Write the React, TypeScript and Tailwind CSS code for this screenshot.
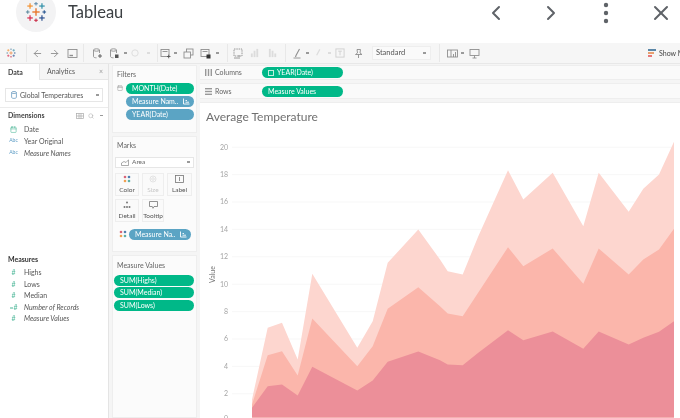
import React from "react";
import { ChevronLeft, ChevronRight, X, ArrowLeft, ArrowRight, Calendar, Search } from "lucide-react";

const top = "252,400 267.7,328.3 282,323.3 297.7,360 312.3,274.3 357.3,348.3 372.7,321.7 387.7,263.3 418.3,230 440,260 447.7,271.7 462.7,275 478.3,236.7 508,170.7 523.3,200 552.7,173.3 583.3,226.7 598.7,173.3 628.7,212.3 643.3,189.3 659,175 674,142.3 674,418 252,418";
const mid = "252,405 267.7,355.7 282,351.7 297.7,376 312.3,319 357.3,366.7 372.7,346.7 387.7,309.3 418.3,287.7 440,306.7 447.7,314 462.7,316.7 508,247.7 523.3,266.7 552.7,249 583.3,284.3 598.7,249 628.7,275 643.3,260 659,250 674,229.3 674,418 252,418";
const low = "252,408.3 267.7,386.7 282,385 297.7,396 312.3,367.3 357.3,391 372.7,381 387.7,362.3 418.3,352 440,360.7 447.7,365 462.7,365.7 478.3,353.3 508,330.7 523.3,340.7 552.7,332 583.3,349.3 598.7,332 628.7,345 643.3,338.3 659,332.3 674,321.7 674,418 252,418";
const ticks = [20, 18, 16, 14, 12, 10, 8, 6, 4, 2, 0];

function SortMark() {
  return (
    <svg width="8" height="7" viewBox="0 0 8 7" className="shrink-0" fill="none" stroke="#fff" strokeWidth="0.9">
      <path d="M1.5 0.5V6H7.5" />
      <path d="M3.5 2.5H5M3.5 4.2H7" />
    </svg>
  );
}

function Pill({ children, color, w, sort, cal }: { children: React.ReactNode; color: "green" | "blue"; w: string; sort?: boolean; cal?: boolean }) {
  return (
    <div className={`${w} h-[11px] shrink-0 rounded-full flex items-center justify-between pl-[6px] pr-[4px] text-[7px] leading-none text-white ${color === "green" ? "bg-[#00b888]" : "bg-[#5ba4c4]"}`}>
      <span className="whitespace-nowrap flex items-center gap-[3px]">
        {cal && <span className="w-[6px] h-[6px] border border-[#bfeede] shrink-0" />}
        {children}
      </span>
      {sort && <SortMark />}
    </div>
  );
}

function MarkBtn({ label, icon, dim, w }: { label: string; icon: React.ReactNode; dim?: boolean; w: string }) {
  return (
    <div className={`${w} h-[23px] border border-[#eeeeee] bg-[#fafafa] flex flex-col items-center justify-center gap-[4px] text-[6.5px] leading-none ${dim ? "text-[#c8c8c8]" : "text-[#555]"}`}>
      {icon}
      <span>{label}</span>
    </div>
  );
}

function Dots() {
  return (
    <svg width="8" height="8" viewBox="0 0 8 8" className="shrink-0">
      <circle cx="2" cy="2" r="1.3" fill="#d9667a" />
      <circle cx="6" cy="2" r="1.3" fill="#4f7fb0" />
      <circle cx="2" cy="6" r="1.3" fill="#f0a050" />
      <circle cx="6" cy="6" r="1.3" fill="#5fb0a8" />
    </svg>
  );
}

function Logo({ size }: { size: number }) {
  const c = (x: number, y: number, r: number, col: string, w: number) => (
    <g key={`${x}-${y}`} stroke={col} strokeWidth={w}>
      <line x1={x - r} y1={y} x2={x + r} y2={y} />
      <line x1={x} y1={y - r} x2={x} y2={y + r} />
    </g>
  );
  return (
    <svg width={size} height={size} viewBox="0 0 24 24" className="shrink-0">
      {c(12, 12, 4, "#e8762b", 1.5)}
      {c(12, 3, 2, "#5b87a8", 1.1)}
      {c(12, 21, 2, "#c7233f", 1.1)}
      {c(3, 12, 2, "#59879b", 1.1)}
      {c(21, 12, 2, "#1f4f8b", 1.1)}
      {c(5.5, 5.5, 3, "#f28e2b", 1.3)}
      {c(18.5, 5.5, 3, "#2f8fa8", 1.3)}
      {c(5.5, 18.5, 3, "#d6274a", 1.3)}
      {c(18.5, 18.5, 3, "#2a4f8f", 1.3)}
    </svg>
  );
}

const G = "#8f8f8f";
const L = "#dcdcdc";

function Cell({ w, children }: { w: string; children?: React.ReactNode }) {
  return <div className={`${w} shrink-0 h-full flex items-center justify-center`}>{children}</div>;
}
const Sep = () => <div className="w-px h-[18px] bg-[#e8e8e8]" />;
const Caret = ({ light }: { light?: boolean }) => <div className={`w-[3px] h-[1.5px] ${light ? "bg-[#dddddd]" : "bg-[#9a9a9a]"}`} />;

function Ico({ children, w = 11, h = 11 }: { children: React.ReactNode; w?: number; h?: number }) {
  return (
    <svg width={w} height={h} viewBox="0 0 11 11" fill="none" stroke={G} strokeWidth="0.9" className="shrink-0">
      {children}
    </svg>
  );
}

const Cyl = () => (
  <>
    <ellipse cx="4.5" cy="2" rx="3" ry="1.2" />
    <path d="M1.5 2V8.5C1.5 9.4 3 9.8 4.5 9.8M7.5 2V5" />
  </>
);

export default function App() {
  return (
    <div className="w-[680px] h-[418px] overflow-hidden bg-white flex flex-col font-['Lato',sans-serif] blur-[0.5px]">
      {/* Header */}
      <div className="h-[43px] shrink-0 flex items-start overflow-hidden bg-white">
        <div className="ml-[16px] mt-[-8px] w-[40px] h-[40px] rounded-full bg-[#f3f3f4] flex items-center justify-center shrink-0">
          <Logo size={22} />
        </div>
        <span className="ml-[12px] mt-[2px] text-[16.5px] leading-[20px] text-[#3c4043]">Tableau</span>
        <div className="ml-auto flex items-center mr-[7px] mt-[1px] gap-[31px] text-[#5f6368]">
          <ChevronLeft size={24} strokeWidth={2} />
          <ChevronRight size={24} strokeWidth={2} />
          <svg width="24" height="24" viewBox="0 0 24 24" fill="#5f6368"><circle cx="12" cy="4" r="2.2" /><circle cx="12" cy="12" r="2.2" /><circle cx="12" cy="20" r="2.2" /></svg>
          <X size={24} strokeWidth={2} />
        </div>
      </div>

      {/* Toolbar */}
      <div className="h-[21px] shrink-0 bg-[#f6f6f6] border-b border-[#e8e8e8] flex items-center text-[7px] text-[#666]">
        <Cell w="w-[22px]"><Logo size={10} /></Cell>
        <Cell w="w-[8px]"><Sep /></Cell>
        <Cell w="w-[14px]"><ArrowLeft size={11} color={G} /></Cell>
        <Cell w="w-[20px]"><ArrowRight size={11} color={G} /></Cell>
        <Cell w="w-[16px]"><Ico><rect x="1" y="1.5" width="9" height="8" /><path d="M2.5 7.5H6" strokeWidth="1.4" /></Ico></Cell>
        <Cell w="w-[6px]"><Sep /></Cell>
        <Cell w="w-[22px]"><Ico><Cyl /><path d="M6 8H10M8 6V10" stroke="#555" /></Ico></Cell>
        <Cell w="w-[12px]"><Ico><Cyl /><rect x="6" y="6.5" width="3.5" height="3.5" fill="#555" stroke="none" /></Ico></Cell>
        <Cell w="w-[10px]"><Caret /></Cell>
        <Cell w="w-[10px]"><svg width="10" height="10" viewBox="0 0 11 11" fill="none" stroke={L}><circle cx="5.5" cy="5.5" r="3.5" /></svg></Cell>
        <Cell w="w-[16px]"><Caret light /></Cell>
        <Cell w="w-[2px]"><Sep /></Cell>
        <Cell w="w-[14px]"><Ico><rect x="1" y="1.5" width="8" height="7" /><path d="M2.5 3.5H7.5" /><path d="M7 8.5H10.5M8.7 6.7V10.3" stroke="#555" /></Ico></Cell>
        <Cell w="w-[6px]"><Caret /></Cell>
        <Cell w="w-[20px]"><Ico><rect x="3.5" y="1" width="6.5" height="6" /><rect x="1" y="4" width="6.5" height="6" fill="#f6f6f6" /></Ico></Cell>
        <Cell w="w-[14px]"><Ico><rect x="1" y="1.5" width="8" height="7" /><path d="M2.5 3.5H7.5" /><rect x="6.5" y="6.5" width="4" height="4" fill="#333" stroke="none" /></Ico></Cell>
        <Cell w="w-[10px]"><Caret /></Cell>
        <Cell w="w-[10px]"><Sep /></Cell>
        <Cell w="w-[10px]"><Ico><rect x="2" y="1" width="8" height="7" strokeDasharray="1.5 0.8" /><path d="M2 10H8M7 9V7" /></Ico></Cell>
        <Cell w="w-[26px]"><svg width="10" height="10" viewBox="0 0 11 11" fill={L}><rect x="1" y="6" width="2" height="4" /><rect x="4" y="3" width="2" height="7" /><rect x="7" y="1" width="2" height="9" /></svg></Cell>
        <Cell w="w-[10px]"><svg width="10" height="10" viewBox="0 0 11 11" fill={L}><rect x="1" y="1" width="2" height="9" /><rect x="4" y="3" width="2" height="7" /><rect x="7" y="6" width="2" height="4" /></svg></Cell>
        <Cell w="w-[14px]"><Sep /></Cell>
        <Cell w="w-[10px]"><Ico><path d="M7.5 1L4 7.5L3.5 9" strokeWidth="1.1" /><path d="M1.5 10H8.5" /></Ico></Cell>
        <Cell w="w-[10px]"><Caret /></Cell>
        <Cell w="w-[12px]"><svg width="10" height="10" viewBox="0 0 11 11" fill="none" stroke={L} strokeWidth="1.3"><path d="M7.5 1.5L4 8" /></svg></Cell>
        <Cell w="w-[10px]"><Caret light /></Cell>
        <Cell w="w-[12px]"><svg width="10" height="10" viewBox="0 0 11 11" fill="none" stroke="#cfcfcf"><rect x="1" y="1" width="9" height="9" /><path d="M3.5 3.5H7.5M5.5 3.5V8" /></svg></Cell>
        <Cell w="w-[24px]"><Ico><path d="M4 1.5H7.5L7 5L9 6.5H2.5L4.5 5Z" /><path d="M5.5 6.5V10" /></Ico></Cell>
        <div className="w-[2px] shrink-0" />
        <div className="w-[59px] h-[14px] shrink-0 bg-[#fafafa] border border-[#eeeeee] flex items-center justify-between pl-[3px] pr-[4px] text-[7.5px] text-[#555]">
          Standard <Caret />
        </div>
        <Cell w="w-[16px]"><Sep /></Cell>
        <Cell w="w-[10px]"><Ico><rect x="0.5" y="2" width="10" height="7" /><path d="M4 2V9M6.5 6V9M8.5 4V9" /></Ico></Cell>
        <Cell w="w-[10px]"><Caret /></Cell>
        <Cell w="w-[14px]"><Ico><rect x="1" y="1.5" width="9" height="6" /><path d="M5.5 7.5V10M3.5 10H7.5" /></Ico></Cell>
        <div className="ml-auto flex items-center gap-[3px] whitespace-nowrap text-[#444] w-[32px] shrink-0 overflow-hidden">
          <svg width="8" height="9" viewBox="0 0 8 9" className="shrink-0"><rect width="8" height="2" fill="#5b87a8" /><rect y="3" width="6" height="2" fill="#e8a070" /><rect y="6" width="4" height="2" fill="#e87878" /></svg>
          Show Me
        </div>
      </div>

      {/* Body */}
      <div className="flex-1 flex min-h-0 bg-[#f5f5f5]">
        {/* Data pane */}
        <div className="w-[109px] shrink-0 bg-white border-r border-[#e4e4e4] flex flex-col text-[7px] text-[#555]">
          <div className="h-[16px] flex text-[7px] shrink-0">
            <div className="w-[39px] flex items-center pl-[8px] font-bold text-[#444]">Data</div>
            <div className="flex-1 bg-[#f5f5f5] border-l border-b border-[#e6e6e6] flex items-center pl-[7px] pr-[5px] justify-between">
              <span>Analytics</span><span className="text-[#999]">×</span>
            </div>
          </div>
          <div className="mt-[8px] mx-[5px] h-[14px] border border-[#e6e6e6] flex items-center justify-between pl-[5px] pr-[3px]">
            <span className="flex items-center gap-[2px] whitespace-nowrap">
              <svg width="7" height="8" viewBox="0 0 7 8" fill="none" stroke="#6a9ac0" strokeWidth="0.8" className="shrink-0"><ellipse cx="3" cy="1.5" rx="2.4" ry="1" /><path d="M0.6 1.5V6.3C0.6 7 1.8 7.4 3 7.4C4.2 7.4 5.4 7 5.4 6.3V1.5" /></svg>
              Global Temperatures
            </span>
            <Caret />
          </div>
          <div className="mt-[5px] border-t border-[#ececec] pt-[1px] pl-[8px] pr-[5px] flex items-center justify-between h-[15px]">
            <span className="font-bold text-[#444]">Dimensions</span>
            <span className="flex items-center gap-[4px] text-[#aaa]">
              <svg width="8" height="6" viewBox="0 0 8 6" fill="none" stroke="#aaa" strokeWidth="0.7"><rect x="0.5" y="0.5" width="7" height="5" /><path d="M3 0.5V5.5M5 0.5V5.5M0.5 3H7.5" /></svg>
              <Search size={6} />
              <span className="ml-[2px]"><Caret /></span>
            </span>
          </div>
          <div className="flex flex-col pl-[8px] mt-[1px]">
            {[["Date", false, true], ["Year Original", false, false], ["Measure Names", true, false]].map(([n, it, d]) => (
              <div key={n as string} className="h-[12px] flex items-center gap-[5px]">
                <span className="w-[11px] flex justify-center">
                  {d ? <Calendar size={7} className="text-[#4fb89a]" /> : <span className="text-[5px] text-[#5b9bc4]">Abc</span>}
                </span>
                <span className={it ? "italic" : ""}>{n as string}</span>
              </div>
            ))}
          </div>
          <div className="mt-[95px] pl-[8px] font-bold text-[#333]">Measures</div>
          <div className="flex flex-col pl-[8px] mt-[2px]">
            {[["Highs", false], ["Lows", false], ["Median", false], ["Number of Records", true], ["Measure Values", true]].map(([n, it]) => (
              <div key={n as string} className="h-[11.6px] flex items-center gap-[5px]">
                <span className="w-[11px] flex justify-center text-[7px] text-[#4fb89a]">{n === "Number of Records" ? "=#" : "#"}</span>
                <span className={it ? "italic" : ""}>{n as string}</span>
              </div>
            ))}
          </div>
        </div>

        {/* Cards */}
        <div className="w-[91px] shrink-0 flex flex-col gap-[3px] pl-[3px] pr-[3px] pt-[1px] text-[7px] text-[#666]">
          <div className="h-[68px] bg-[#fbfbfb] border border-[#eeeeee] pt-[3px] pl-[4px] pr-[2px] shrink-0">
            <div>Filters</div>
            <div className="mt-[3px] flex flex-col gap-[2px]">
              <div className="flex items-center gap-[3px]">
                <Calendar size={6} className="text-[#999] shrink-0" />
                <Pill color="green" w="w-[68px]">MONTH(Date)</Pill>
              </div>
              <div className="ml-[9px]"><Pill color="blue" w="w-[68px]" sort>Measure Nam..</Pill></div>
              <div className="ml-[9px]"><Pill color="blue" w="w-[68px]">YEAR(Date)</Pill></div>
            </div>
          </div>
          <div className="h-[116px] bg-[#fbfbfb] border border-[#eeeeee] pt-[3px] px-[2px] shrink-0">
            <div className="pl-[2px]">Marks</div>
            <div className="mt-[6px] h-[11px] border border-[#e6e6e6] bg-white flex items-center justify-between pl-[5px] pr-[3px] text-[6.5px]">
              <span className="flex items-center gap-[3px]">
                <svg width="8" height="7" viewBox="0 0 8 7" fill="none" stroke="#888" strokeWidth="0.7"><path d="M0.5 6.5V4L3 2.5L5 3.5L7.5 0.8V6.5Z" /></svg>
                Area
              </span>
              <Caret />
            </div>
            <div className="mt-[5px] flex gap-[3px]">
              <MarkBtn w="w-[24px]" label="Color" icon={<Dots />} />
              <MarkBtn w="w-[22px]" label="Size" dim icon={<svg width="8" height="8" viewBox="0 0 8 8" fill="none" stroke="#ddd" strokeWidth="0.8"><circle cx="4" cy="4" r="3" /><circle cx="4" cy="4" r="1.3" /></svg>} />
              <MarkBtn w="w-[25px]" label="Label" icon={<svg width="9" height="8" viewBox="0 0 9 8" fill="none" stroke="#777" strokeWidth="0.8"><rect x="0.5" y="0.5" width="8" height="7" /><path d="M4.5 2V6" /></svg>} />
            </div>
            <div className="mt-[3px] flex gap-[3px]">
              <MarkBtn w="w-[24px]" label="Detail" icon={<svg width="8" height="8" viewBox="0 0 8 8" fill="#777"><circle cx="4" cy="1.5" r="1" /><circle cx="1.5" cy="6" r="1" /><circle cx="4" cy="6" r="1" /><circle cx="6.5" cy="6" r="1" /></svg>} />
              <MarkBtn w="w-[22px]" label="Tooltip" icon={<svg width="9" height="8" viewBox="0 0 9 8" fill="none" stroke="#777" strokeWidth="0.8"><path d="M0.5 0.5H8.5V5.5H5L4 7.3L3.3 5.5H0.5Z" /></svg>} />
            </div>
            <div className="mt-[7px] flex items-center gap-[2px] pl-[4px]">
              <Dots />
              <Pill color="blue" w="w-[62px]" sort>Measure Na..</Pill>
            </div>
          </div>
          <div className="flex-1 bg-[#fbfbfb] border border-[#eeeeee] pt-[4px] px-[1px]">
            <div className="pl-[3px]">Measure Values</div>
            <div className="mt-[4px] flex flex-col gap-[1.7px]">
              <Pill color="green" w="w-[80px]">SUM(Highs)</Pill>
              <Pill color="green" w="w-[80px]">SUM(Median)</Pill>
              <Pill color="green" w="w-[80px]">SUM(Lows)</Pill>
            </div>
          </div>
        </div>

        {/* Main */}
        <div className="flex-1 flex flex-col min-w-0 gap-[3px] pt-[1px] text-[7px] text-[#666]">
          <div className="h-[15px] bg-[#fafafa] border-y border-[#eeeeee] flex items-center shrink-0">
            <span className="w-[62px] pl-[5px] flex items-center gap-[3px]">
              <svg width="7" height="7" viewBox="0 0 7 7" fill="#999"><rect width="1.4" height="7" /><rect x="2.8" width="1.4" height="7" /><rect x="5.6" width="1.4" height="7" /></svg>
              Columns
            </span>
            <Pill color="green" w="w-[81px]" cal>YEAR(Date)</Pill>
          </div>
          <div className="h-[16px] bg-[#fafafa] border-y border-[#eeeeee] flex items-center shrink-0">
            <span className="w-[62px] pl-[5px] flex items-center gap-[3px]">
              <svg width="7" height="7" viewBox="0 0 7 7" fill="#999"><rect width="7" height="1.4" /><rect y="2.8" width="7" height="1.4" /><rect y="5.6" width="7" height="1.4" /></svg>
              Rows
            </span>
            <Pill color="green" w="w-[81px]">Measure Values</Pill>
          </div>
          <div className="flex-1 min-h-0 bg-white flex flex-col border-t border-[#eeeeee]">
            <div className="h-[27px] shrink-0 pl-[6px] flex items-center text-[12px] text-[#707070]">Average Temperature</div>
            <svg className="block flex-1 min-h-0" width="480" height="287" viewBox="200 131 480 287">
              {ticks.map((t, i) => (
                <g key={t}>
                  <line x1="232" x2="674" y1={147.7 + i * 27.4} y2={147.7 + i * 27.4} stroke="#f3f3f3" strokeWidth="0.7" />
                  <text x="228" y={t === 0 ? 421 : 150 + i * 27.4} textAnchor="end" fontSize="7" fill="#a5a5a5">{t}</text>
                </g>
              ))}
              <text transform="translate(214.5 275) rotate(-90)" textAnchor="middle" fontSize="7" fill="#777">Value</text>
              <polygon points={top} fill="#fdd6cf" />
              <polygon points={mid} fill="#fbb6ab" />
              <polygon points={low} fill="#ec8f99" />
            </svg>
          </div>
        </div>
      </div>
    </div>
  );
}
